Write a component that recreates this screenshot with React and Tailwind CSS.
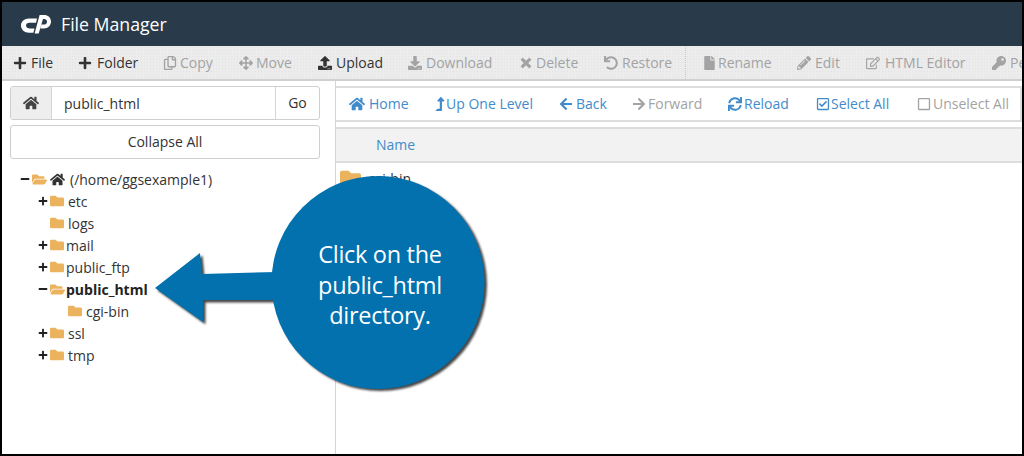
import React from "react";
import {
  FaPlus, FaFolder, FaFolderOpen, FaRegCopy, FaArrowsAlt, FaUpload, FaDownload, FaTimes, FaUndo,
  FaFile, FaPencilAlt, FaRegEdit, FaKey, FaHome, FaLevelUpAlt, FaArrowLeft, FaArrowRight, FaSync,
  FaRegCheckSquare, FaRegSquare, FaMinus,
} from "react-icons/fa";

const dots = "bg-[#ececec] bg-[radial-gradient(#e2e2e2_1px,transparent_1px)] bg-[size:3px_3px]";

const top = [
  [FaPlus, "File", true, 65, 4, "w-[14px]"],
  [FaPlus, "Folder", true, 85, 5, "w-[14px]"],
  [FaRegCopy, "Copy", false, 76, 3, "w-[14px]"],
  [FaArrowsAlt, "Move", false, 79, 3, "w-[14px]"],
  [FaUpload, "Upload", true, 90, 4, "w-[14px]"],
  [FaDownload, "Download", false, 111, 4, "w-[14px]"],
  [FaTimes, "Delete", false, 85, 3, "w-[14px] stroke-[30px]"],
  [FaUndo, "Restore", false, 100, 4, "w-[14px]"],
  [FaFile, "Rename", false, 93, 3, "w-[11px]"],
  [FaPencilAlt, "Edit", false, 69, 4, "w-[14px]"],
  [FaRegEdit, "HTML Editor", false, 126, 5, "w-[14px]"],
  [FaKey, "Permissions", false, 110, 4, "w-[14px]"],
];

const nav = [
  [FaHome, "Home", true, 86, 4, "w-[16px] h-[16px]"],
  [FaLevelUpAlt, "Up One Level", true, 124, 1, "w-[10px]"],
  [FaArrowLeft, "Back", true, 73, 3, "w-[14px]"],
  [FaArrowRight, "Forward", false, 96, 2, "w-[14px]"],
  [FaSync, "Reload", true, 88, 2, "w-[14px]"],
  [FaRegCheckSquare, "Select All", true, 101, 1, "w-[14px]"],
  [FaRegSquare, "Unselect All", false, 100, 2, "w-[14px]"],
];

const tree = [
  { sign: "+", label: "etc", gap: "ml-[4px]" },
  { label: "logs", gap: "ml-[4px]" },
  { sign: "+", label: "mail" },
  { sign: "+", label: "public_ftp" },
  { sign: "-", label: "public_html", open: true, bold: true, gap: "ml-[1px]" },
  { label: "cgi-bin", indent: true, gap: "ml-[4px]" },
  { sign: "+", label: "ssl", gap: "ml-[4px]" },
  { sign: "+", label: "tmp", gap: "ml-[4px]" },
];

function Sign({ s }) {
  const Icon = s === "-" ? FaMinus : FaPlus;
  return <span className="w-[12px] flex shrink-0">{s && <Icon className="text-[10px] text-[#222]" />}</span>;
}

function Logo() {
  return (
    <svg width="30" height="20" viewBox="0 0 30 20" className="shrink-0" fill="#fff">
      <path d="M8 4.5H16L15 8.8H8.3C6.3 8.8 5 10 5 11.6 5 13.2 6.3 14.4 8.3 14.4H13.5L12.4 18.8H8C3.4 18.8 0 15.7 0 11.6 0 7.5 3.4 4.5 8 4.5Z" />
      <path d="M13.6 19.6 18.6 1H23C27 1 30 3.7 30 7.6 30 11.6 27 14.6 23 14.6H19.4L20.5 10.6H23C24.8 10.6 26 9.3 26 7.7 26 6.1 24.8 5 23 5H22L17.7 19.6Z" />
    </svg>
  );
}

export default function App() {
  return (
    <div className="w-[1024px] h-[456px] border-2 border-black bg-white overflow-hidden flex flex-col font-['Open_Sans',sans-serif] text-[14px] text-[#333] relative">
      <header className="h-[44px] shrink-0 bg-[#293a4a] flex items-center pl-[19px] gap-[10px] text-white">
        <Logo />
        <span className="text-[17.7px] leading-none pt-[1px]">File Manager</span>
      </header>

      <div className={`h-[35px] shrink-0 ${dots} border-b-2 border-[#d0d0d0] flex items-center pl-[11px] whitespace-nowrap`}>
        {top.map(([Icon, label, on, w, g, iw], i) => (
          <React.Fragment key={label}>
            {i === 8 && <span className="h-[33px] border-l border-dotted border-[#c8c8c8] -ml-[19px] mr-[18px] shrink-0" />}
            <div className={`flex items-center shrink-0 ${on ? "text-[#333]" : "text-[#a3a3a3]"}`} style={{ width: w, gap: g }}>
              <Icon className={`text-[14px] shrink-0 ${iw}`} />
              <span>{label}</span>
            </div>
          </React.Fragment>
        ))}
      </div>

      <div className="flex-1 flex min-h-0">
        <aside className="w-[334px] shrink-0 border-r border-[#d4d4d4] pt-[5px] pl-[8px] pr-[15px]">
          <div className="h-[34px] flex border border-[#cfcfcf] rounded-[3px] overflow-hidden">
            <div className="w-[41px] bg-[#eeeeee] border-r border-[#d6d6d6] flex items-center justify-center">
              <FaHome className="text-[16px] text-[#444]" />
            </div>
            <div className="flex-1 flex items-center pl-[12px]">public_html</div>
            <div className="w-[44px] border-l border-[#d6d6d6] flex items-center justify-center pb-[1px]">Go</div>
          </div>
          <div className="mt-[5px] h-[34px] border border-[#cfcfcf] rounded-[3px] flex items-center justify-center pb-[1px]">Collapse All</div>

          <ul className="mt-[9px] pl-[10px]">
            <li className="h-[22px] flex items-center">
              <FaMinus className="text-[10px] text-[#222] w-[10px] shrink-0" />
              <FaFolderOpen className="text-[15px] text-[#ecb35f] ml-[2px] shrink-0" />
              <FaHome className="text-[15px] text-[#333] ml-[3px] shrink-0" />
              <span className="ml-[5px]">(/home/ggsexample1)</span>
            </li>
            {tree.map((t) => (
              <li key={t.label} className={`h-[22px] flex items-center ${t.indent ? "pl-[48px]" : "pl-[18px]"}`}>
                {!t.indent && <Sign s={t.sign} />}
                {t.open ? (
                  <FaFolderOpen className="text-[15px] text-[#ecb35f] shrink-0" />
                ) : (
                  <FaFolder className="text-[14px] text-[#ecb35f] shrink-0" />
                )}
                <span className={`${t.gap || "ml-[2px]"} ${t.bold ? "font-bold text-[#222]" : ""}`}>{t.label}</span>
              </li>
            ))}
          </ul>
        </aside>

        <main className="flex-1 min-w-0 pt-[5px] overflow-hidden">
          <div className="h-[36px] border-y-2 border-r-2 border-[#dddddd] flex items-center pl-[13px] pb-[1px] whitespace-nowrap">
            {nav.map(([Icon, label, on, w, g, iw]) => (
              <div key={label} className={`flex items-center shrink-0 ${on ? "text-[#428bca]" : "text-[#a3a3a3]"}`} style={{ width: w, gap: g }}>
                <Icon className={`text-[14px] shrink-0 ${iw}`} />
                <span>{label}</span>
              </div>
            ))}
          </div>
          <div className="mt-[5px] h-[36px] bg-[#f2f2f2] border-y-2 border-[#dddddd] flex items-center pl-[40px] pb-[1px] text-[#428bca]">Name</div>
          <div className="h-[30px] flex items-center pl-[4px]">
            <FaFolder className="text-[21px] text-[#ecb35f] shrink-0" />
            <span className="ml-[7px]">cgi-bin</span>
          </div>
        </main>
      </div>

      <div className="absolute left-[150px] top-[170px] w-[345px] h-[225px]">
        <svg width="345" height="225" viewBox="0 0 345 225" className="absolute inset-0">
          <g fill="#000" opacity=".72" transform="translate(2.5 2.5)" style={{ filter: "blur(1px)" }}>
            <circle cx="226" cy="110" r="106.5" />
            <path d="M3 116 48 81 50 102 125 100 125 128 51 128 51 150Z" />
          </g>
          <g fill="#0271ae">
            <circle cx="226" cy="110.5" r="106.5" />
            <path d="M3 116 48 81 50 102 125 100 125 128 51 128 51 150Z" />
          </g>
        </svg>
        <div className="absolute left-[122px] top-[67px] w-[212px] text-center text-white text-[23.5px] leading-[30.5px] font-['Open_Sans',sans-serif] tracking-[-0.3px]">
          <div>Click on the</div>
          <div>public_html</div>
          <div>directory.</div>
        </div>
      </div>
    </div>
  );
}
